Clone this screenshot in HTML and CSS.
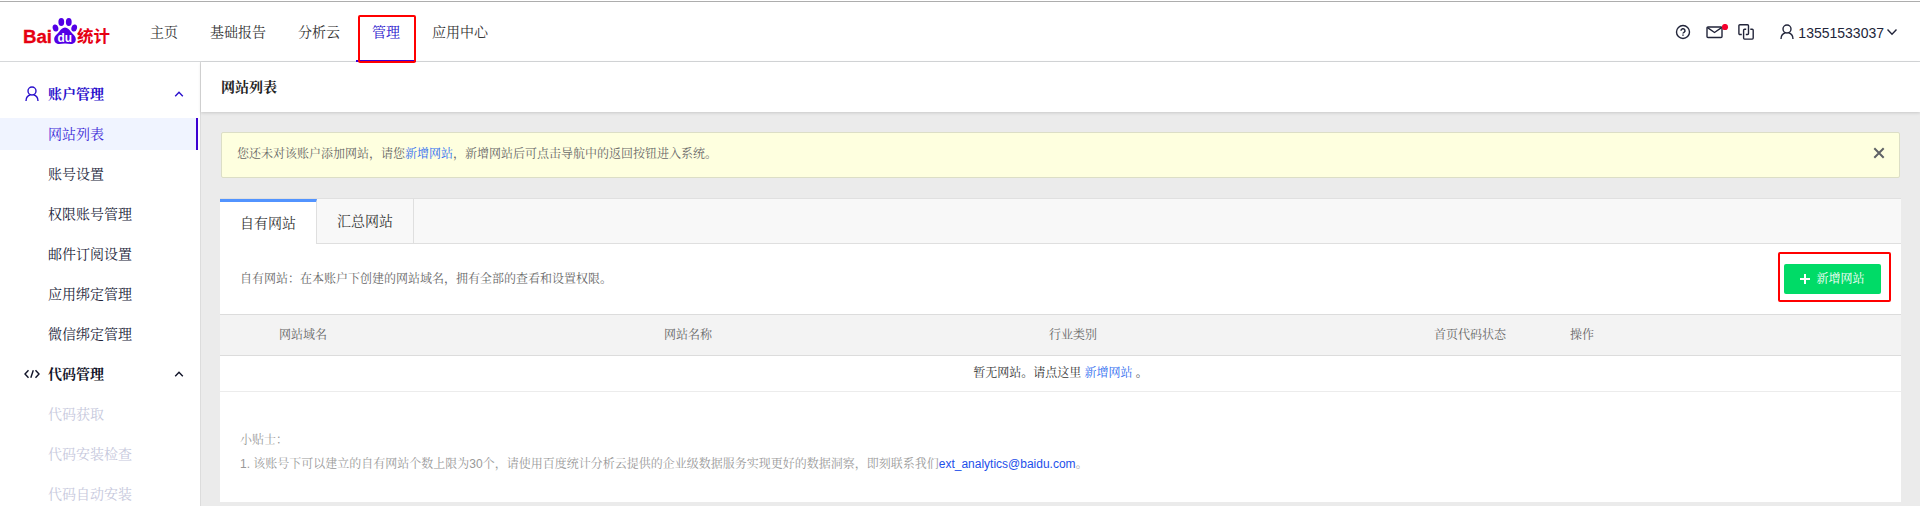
FILE: index.html
```html
<!DOCTYPE html>
<html lang="zh-CN">
<head>
<meta charset="utf-8">
<title>百度统计</title>
<link rel="stylesheet" href="styles.css">
</head>
<body>
<div class="app">
  <header class="header">
    <svg class="logo" width="88" height="30" viewBox="0 0 88 30">
      <text class="logo-latin" x="0" y="26" textLength="29" lengthAdjust="spacingAndGlyphs">Bai</text>
      <g fill="#5300e6">
        <ellipse cx="32.5" cy="11" rx="2.8" ry="3.6" transform="rotate(-15 32.5 11)"/>
        <ellipse cx="38.3" cy="5" rx="2.9" ry="4"/>
        <ellipse cx="45.8" cy="5" rx="2.9" ry="4"/>
        <ellipse cx="51.2" cy="11" rx="2.8" ry="3.6" transform="rotate(15 51.2 11)"/>
        <path d="M42 10.500c2.800 0 4.300 2.300 6 4.500 2 2.400 4.800 4 4.800 7.300 0 3.200-2.200 4.700-5 4.700-2 0-3.800-.5-5.800-.5s-3.800.5-5.800.5c-2.800 0-5-1.500-5-4.700 0-3.300 2.800-4.900 4.800-7.300 1.700-2.200 3.200-4.500 6-4.500z"/>
      </g>
      <text class="logo-du" x="34.500" y="25.300" textLength="14.500" lengthAdjust="spacingAndGlyphs">du</text>
      <text class="logo-cn" x="54" y="25.300" textLength="33" lengthAdjust="spacingAndGlyphs">统计</text>
    </svg>
    <nav class="nav">
      <a class="nav-item">主页</a>
      <a class="nav-item">基础报告</a>
      <a class="nav-item">分析云</a>
      <a class="nav-item nav-active">管理<span class="mark mark-nav"></span></a>
      <a class="nav-item">应用中心</a>
    </nav>
    <div class="tools">
      <svg width="16" height="16" viewBox="0 0 16 16" class="line">
        <circle cx="8" cy="8" r="6.500"/><path d="M6 6.700a2 1.900 0 1 1 3 1.600c-.7.400-1 .6-1 1.300M8 10.500v1.200" stroke-width="1.500"/>
      </svg>
      <svg width="24" height="16" viewBox="0 0 24 16" class="line mail">
        <rect x="1" y="3" width="15" height="10.500" rx="1"/><path d="M1.500 3.700l7 4.800 7-4.800"/><circle cx="19" cy="3" r="3.100" fill="#f5002d" stroke="none"/>
      </svg>
      <svg width="16" height="16" viewBox="0 0 16 16" class="line copy">
        <path d="M3.800 10.500H1.900a1 1 0 0 1-1-1V1.700a1 1 0 0 1 1-1h7.600a1 1 0 0 1 1 1v7.800a1 1 0 0 1-1 1H7.800"/><path d="M12.300 5.200h1.900a1 1 0 0 1 1 1v7.900a1 1 0 0 1-1 1H6.600a1 1 0 0 1-1-1V6.200a1 1 0 0 1 1-1h1.600"/>
      </svg>
      <svg width="14" height="16" viewBox="0 0 14 16" class="line user">
        <circle cx="7" cy="5" r="4"/><path d="M1 15c0-3.600 1.900-5.600 4.500-6.300M13 15c0-3.600-1.900-5.600-4.500-6.300"/>
      </svg>
      <span class="phone">13551533037</span>
      <svg width="10" height="8" viewBox="0 0 10 8" class="line down"><path d="M.5 1.500L5 6.300l4.500-4.800"/></svg>
    </div>
  </header>
  <div class="body">
    <aside class="side">
      <div class="side-row side-group side-current">
        <svg width="14" height="16" viewBox="0 0 14 16" class="side-icon"><circle cx="7" cy="5" r="4"/><path d="M1 15c0-3.600 1.900-5.600 4.500-6.300M13 15c0-3.600-1.900-5.600-4.500-6.300"/></svg>
        <span>账户管理</span>
        <svg width="10" height="6" viewBox="0 0 10 6" class="caret"><path d="M1.200 5.200L5 1.200l3.800 4"/></svg>
      </div>
      <div class="side-row side-selected">网站列表</div>
      <div class="side-row">账号设置</div>
      <div class="side-row">权限账号管理</div>
      <div class="side-row">邮件订阅设置</div>
      <div class="side-row">应用绑定管理</div>
      <div class="side-row">微信绑定管理</div>
      <div class="side-row side-group">
        <svg width="16" height="10" viewBox="0 0 16 10" class="side-icon"><path d="M4.500 1.200L1 5l3.500 3.800M11.500 1.200L15 5l-3.500 3.800M9.300 1.200L6.800 8.800"/></svg>
        <span>代码管理</span>
        <svg width="10" height="6" viewBox="0 0 10 6" class="caret"><path d="M1.200 5.200L5 1.200l3.800 4"/></svg>
      </div>
      <div class="side-row side-disabled">代码获取</div>
      <div class="side-row side-disabled">代码安装检查</div>
      <div class="side-row side-disabled">代码自动安装</div>
    </aside>
    <main class="main">
      <h1 class="title">网站列表</h1>
      <div class="alert">
        <span>您还未对该账户添加网站，请您<a class="link">新增网站</a>，新增网站后可点击导航中的返回按钮进入系统。</span>
        <svg width="12" height="12" viewBox="0 0 12 12" class="close"><path d="M1.300 1.300l9.400 9.400M10.700 1.300l-9.400 9.400"/></svg>
      </div>
      <section class="panel">
        <div class="tabs">
          <div class="tab tab-active">自有网站</div>
          <div class="tab">汇总网站</div>
        </div>
        <div class="intro">
          <span>自有网站：在本账户下创建的网站域名，拥有全部的查看和设置权限。</span>
          <button class="add"><svg width="10" height="10" viewBox="0 0 10 10"><path d="M5 0v10M0 5h10" stroke="#fff" stroke-width="2"/></svg>新增网站<span class="mark mark-add"></span></button>
        </div>
        <div class="thead">
          <span>网站域名</span><span>网站名称</span><span>行业类别</span><span>首页代码状态</span><span>操作</span>
        </div>
        <div class="empty">暂无网站。请点这里&nbsp;<a class="link">新增网站</a>&nbsp;。</div>
        <div class="tips">
          <div>小贴士：</div>
          <div>1. 该账号下可以建立的自有网站个数上限为30个，请使用百度统计分析云提供的企业级数据服务实现更好的数据洞察，即刻联系我们<a class="mailto">ext_analytics@baidu.com</a>。</div>
        </div>
      </section>
    </main>
  </div>
</div>
</body>
</html>
```
FILE: styles.css
```css
* { box-sizing: border-box; }
html, body { height: 506px; overflow: hidden; }
body {
  margin: 0;
  background: #fff;
  color: #22253a;
  font: 14px/20px "Liberation Sans", "Noto Serif CJK SC", "Noto Sans CJK SC", sans-serif;
}
.app { height: 506px; overflow: hidden; display: flex; flex-direction: column; padding-top: 1px; }
.header {
  height: 61px;
  flex: none;
  display: flex;
  align-items: center;
  border-top: 1px solid #adadad;
  border-bottom: 1px solid #d6d8da;
  padding: 0 23px 0 23px;
}
.logo { flex: none; overflow: visible; }
.logo-latin { font: bold 18px "Liberation Sans", sans-serif; fill: #e60012; stroke: #e60012; stroke-width: .3; }
.logo-du { font: bold 12px "Liberation Sans", sans-serif; fill: #fff; }
.logo-cn { font: bold 16px "Noto Sans CJK SC", sans-serif; fill: #e60012; }
.nav { display: flex; align-self: stretch; margin-left: 23px; }
.nav-item { position: relative; padding: 20px 16px 0; height: 60px; color: #333; }
.nav-item.nav-active { color: #2a14cc; border-bottom: 2px solid #3c00d2; }
.mark { position: absolute; border: 2px solid #f00; border-radius: 2px; pointer-events: none; }
.mark-nav { left: 2px; top: 13px; width: 58px; height: 48px; }
.mark-add { left: -6px; top: -12px; width: 113px; height: 50px; }
.tools { margin-left: auto; display: flex; align-items: center; }
.line { fill: none; stroke: #22253a; stroke-width: 1.400; }
.mail { margin-left: 15px; }
.copy { margin-left: 8px; }
.user { margin-left: 26px; }
.phone { margin: 2px 3px 0 4px; }
.body { flex: 1; min-height: 0; display: flex; }
.side { width: 201px; flex: none; border-right: 1px solid #dcdcdc; padding: 16px 2px 0 0; overflow: hidden; }
.side-row { height: 32px; margin-bottom: 8px; line-height: 32px; padding-left: 48px; }
.side-group { display: flex; align-items: center; font-weight: bold; padding: 0 14px 0 24px; color: #101328; }
.side-icon { width: 16px; margin-right: 8px; }
.side-icon, .caret { fill: none; stroke: currentColor; stroke-width: 1.400; }
.caret { margin-left: auto; }
.side-current { color: #2a10cc; }
.side-selected { background: #f0f4ff; color: #3d2bd8; border-right: 2px solid #3c00d2; }
.side-disabled { color: #c6c8dc; }
.main { flex: 1; min-width: 0; background: #ebebeb; }
.title {
  margin: 0;
  height: 50px;
  padding-left: 20px;
  background: #fff;
  color: #222;
  font-size: 14px;
  line-height: 50px;
  box-shadow: 0 1px 3px rgba(0, 0, 0, .15);
}
.alert {
  margin: 20px 20px 0;
  height: 46px;
  display: flex;
  align-items: center;
  justify-content: space-between;
  padding: 0 14px 2px 15px;
  background: #feffdf;
  border: 1px solid #dcdec6;
  border-radius: 2px;
  font-size: 12px;
  color: #666;
}
.close { stroke: #5f6266; stroke-width: 2; fill: none; margin-bottom: 2px; }
.link { color: #2f6df0; }
.panel { margin: 20px 19px 0; height: 304px; background: #fff; font-size: 12px; color: #666; }
.tabs { height: 46px; display: flex; background: #f8f8f8; border-top: 1px solid #e0e0e0; border-bottom: 1px solid #dfdfdf; font-size: 14px; color: #333; }
.tab { width: 97px; line-height: 44px; padding-left: 20px; border-right: 1px solid #dfdfdf; }
.tab-active { height: 45px; line-height: 41px; background: #fff; border-top: 3px solid #5294ff; padding-top: 1px; }
.intro { height: 70px; display: flex; justify-content: space-between; align-items: center; padding: 0 20px; }
.intro > span { margin-top: -1px; }
.add {
  position: relative;
  width: 97px;
  height: 30px;
  border: 0;
  padding: 0;
  border-radius: 2px;
  background: #00db67;
  color: #fff;
  font: inherit;
  display: flex;
  align-items: center;
  justify-content: center;
  gap: 6px;
}
.thead {
  height: 42px;
  display: grid;
  grid-template-columns: 385px 385px 385px 136px 1fr;
  align-items: center;
  padding: 0 0 1px 59px;
  background: #f3f3f3;
  border: solid #dcdcdc;
  border-width: 1px 0;
}
.empty { height: 36px; line-height: 34px; border-bottom: 1px solid #ececec; text-align: center; color: #333; }
.tips { padding: 36px 20px 0; line-height: 24px; color: #999; }
.mailto { color: #1d50ea; }
```
